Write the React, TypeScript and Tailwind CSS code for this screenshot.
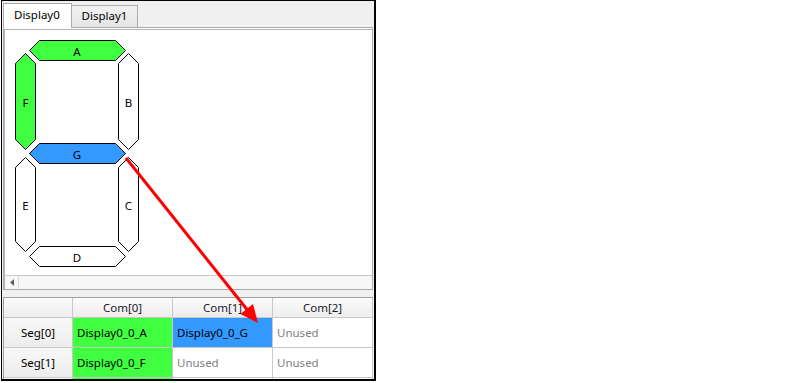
import React from "react";

type Seg = { id: string; pts: string; lx: number; ly: number; fill: string };

const GREEN = "#40ff40";
const BLUE = "#3399ff";

// coords are page pixels (svg viewBox is shifted to match)
const segments: Seg[] = [
  { id: "A", pts: "29.5,50.5 39.5,40.5 115.5,40.5 125.5,50.5 115.5,60.5 39.5,60.5", lx: 77, ly: 51, fill: GREEN },
  { id: "B", pts: "128.5,53.5 138.5,63.5 138.5,139.5 128.5,149.5 118.5,139.5 118.5,63.5", lx: 128.5, ly: 102, fill: "#ffffff" },
  { id: "C", pts: "128.5,157.5 138.5,167.5 138.5,241.5 128.5,251.5 118.5,241.5 118.5,167.5", lx: 128.5, ly: 205, fill: "#ffffff" },
  { id: "D", pts: "29.5,256.5 39.5,246.5 115.5,246.5 125.5,256.5 115.5,266.5 39.5,266.5", lx: 77, ly: 257, fill: "#ffffff" },
  { id: "E", pts: "25.5,157.5 35.5,167.5 35.5,241.5 25.5,251.5 15.5,241.5 15.5,167.5", lx: 25.5, ly: 205, fill: "#ffffff" },
  { id: "F", pts: "25.5,53.5 35.5,63.5 35.5,139.5 25.5,149.5 15.5,139.5 15.5,63.5", lx: 25.5, ly: 102, fill: GREEN },
  { id: "G", pts: "29.5,153.5 39.5,143.5 115.5,143.5 125.5,153.5 115.5,163.5 39.5,163.5", lx: 77, ly: 154, fill: BLUE },
];

type Cell = { text: string; bg?: string; unused?: boolean };

const rows: { label: string; cells: Cell[] }[] = [
  {
    label: "Seg[0]",
    cells: [
      { text: "Display0_0_A", bg: "bg-[#40ff40]" },
      { text: "Display0_0_G", bg: "bg-[#3399ff]" },
      { text: "Unused", unused: true },
    ],
  },
  {
    label: "Seg[1]",
    cells: [
      { text: "Display0_0_F", bg: "bg-[#40ff40]" },
      { text: "Unused", unused: true },
      { text: "Unused", unused: true },
    ],
  },
  // next row is only a sliver under the frame edge
  {
    label: "",
    cells: [{ text: "", bg: "bg-[#40ff40]" }, { text: "" }, { text: "" }],
  },
];

const SegmentView = () => (
  <svg width={140} height={244} viewBox="5 30 140 244" className="block">
    {segments.map((s) => (
      <g key={s.id}>
        <polygon points={s.pts} fill={s.fill} stroke="#000" strokeWidth={1} />
        <text
          x={s.lx}
          y={s.ly}
          textAnchor="middle"
          dominantBaseline="central"
          fontSize={11.5}
          fill="#000"
          fontFamily="'Noto Sans', sans-serif"
        >
          {s.id}
        </text>
      </g>
    ))}
  </svg>
);

const App = () => {
  return (
    <div className="relative w-[799px] h-[383px] bg-white font-['Noto_Sans',sans-serif] text-[11.5px] text-black overflow-hidden">
      <div className="ml-px w-[375px] h-[381px] border-l border-t border-r-2 border-b-2 border-black bg-[#f0f0f0] flex flex-col overflow-hidden">
        {/* tabs */}
        <div className="h-[26px] flex items-end pl-px shrink-0">
          <div className="relative z-10 -mb-px w-[69px] h-[25px] bg-white border border-b-0 border-[#acacac] pl-[10px] pt-[2px] leading-[18px]">
            Display0
          </div>
          <div className="-ml-px w-[67px] h-[22px] bg-gradient-to-b from-[#f2f2f2] to-[#e5e5e5] border border-b-0 border-[#acacac] text-center leading-[20px]">
            Display1
          </div>
        </div>

        {/* tab page */}
        <div className="mx-px h-[263px] shrink-0 border border-[#acacac] bg-white flex flex-col">
          <div className="flex-1 mt-px border-t border-l border-[#b4b4b4] flex flex-col">
            <div className="flex-1">
              <SegmentView />
            </div>
            <div className="h-[14px] border-t border-[#c8c8c8] bg-[#f7f7f7] flex">
              <div className="w-[14px] flex items-center justify-center border-r border-[#dadada]">
                <svg width="4" height="7" viewBox="0 0 4 7">
                  <polygon points="4,0 4,7 0,3.5" fill="#606060" />
                </svg>
              </div>
            </div>
          </div>
        </div>

        {/* grid */}
        <div className="mt-[7px] ml-px w-[370px] border-t border-l border-[#a0a0a0] bg-white">
          <div className="flex h-[20px]">
            <div className="w-[69px] border-r border-b border-[#c8c8c8] bg-gradient-to-b from-[#fbfbfb] to-[#eeeeee]" />
            {["Com[0]", "Com[1]", "Com[2]"].map((c) => (
              <div
                key={c}
                className="w-[100px] border-r border-b border-[#c8c8c8] bg-gradient-to-b from-[#fbfbfb] to-[#eeeeee] flex items-center justify-center text-[#1a1a2a]"
              >
                {c}
              </div>
            ))}
          </div>
          {rows.map((r, ri) => (
            <div key={ri} className="flex h-[30px]">
              <div className="w-[69px] border-r border-b border-[#c8c8c8] bg-gradient-to-b from-[#f8f8f8] to-[#ededed] flex items-center justify-center">
                {r.label}
              </div>
              {r.cells.map((c, i) => (
                <div
                  key={i}
                  className={`w-[100px] border-r border-b border-[#c8c8c8] flex items-center pl-[4px] ${c.bg ?? ""} ${c.unused ? "text-[#808080]" : ""}`}
                >
                  {c.text}
                </div>
              ))}
            </div>
          ))}
        </div>
      </div>

      {/* link arrow drawn over everything */}
      <svg className="absolute left-0 top-0 pointer-events-none" width={799} height={383}>
        <line x1={126} y1={158} x2={249} y2={312} stroke="#ff0000" strokeWidth={3} />
        <polygon points="258,323 240.5,313.9 253,303.9" fill="#ff0000" />
      </svg>
    </div>
  );
};

export default App;
